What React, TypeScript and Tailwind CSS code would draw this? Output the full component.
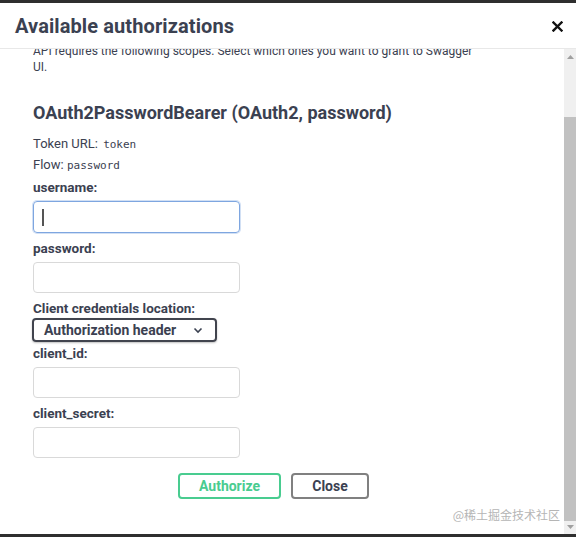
import React from "react";

const font = { fontFamily: 'Roboto, "Open Sans", sans-serif' };
const mono = { fontFamily: '"DejaVu Sans Mono", monospace' };

function Label({ children, mt }: { children: React.ReactNode; mt: string }) {
  return (
    <div className={`${mt} h-[16px] leading-[16px] text-[13.5px] font-bold text-[#3b4151]`}>{children}</div>
  );
}

export default function App() {
  return (
    <div className="w-[576px] h-[537px] bg-white flex flex-col overflow-hidden border-t-[3px] border-b-[3px] border-[#2f2f2f]" style={font}>
      <div className="h-[46px] shrink-0 flex items-center justify-between pl-[15px] pr-[13px] border-b border-[#e8e8e8]">
        <div className="text-[20px] font-bold text-[#3b4151] tracking-[0.1px]">Available authorizations</div>
        <svg width="11" height="11" viewBox="0 0 11 11" className="mt-[1px]">
          <path d="M1.5 1.5 L9.5 9.5 M9.5 1.5 L1.5 9.5" stroke="#111" strokeWidth="2.4" strokeLinecap="square" />
        </svg>
      </div>
      <div className="flex-1 flex min-h-0">
        <div className="flex-1 relative overflow-hidden">
          <div className="pl-[33px] pr-[40px]">
            <div className="mt-[-6px] w-[445px] text-[12px] leading-[16px] text-[#3b4151]">
              API requires the following scopes. Select which ones you want to grant to Swagger UI.
            </div>
            <div className="mt-[26px] h-[24px] leading-[24px] text-[18px] font-bold text-[#3b4151]">
              OAuth2PasswordBearer (OAuth2, password)
            </div>
            <div className="mt-[11px] h-[16px] leading-[16px] text-[13px] text-[#3b4151]">
              Token URL: <code className="text-[11px] ml-[2px]" style={mono}>token</code>
            </div>
            <div className="mt-[5px] h-[16px] leading-[16px] text-[13px] text-[#3b4151]">
              Flow: <code className="text-[11px]" style={mono}>password</code>
            </div>
            <Label mt="mt-[6px]">username:</Label>
            <div className="mt-[6px] w-[207px] h-[32px] rounded-[4px] border border-[#7ea6e0] shadow-[0_0_0_1px_rgba(126,166,224,0.35)] flex items-center pl-[8px]">
              <div className="w-[2px] h-[17px] bg-[#555]" />
            </div>
            <Label mt="mt-[7px]">password:</Label>
            <div className="mt-[6px] w-[207px] h-[31px] rounded-[4px] border border-[#d9d9d9]" />
            <Label mt="mt-[7px]">Client credentials location:</Label>
            <div className="mt-[2px] ml-[-1px] w-[185px] h-[24px] rounded-[4px] border-2 border-[#41444e] shadow-[0_1px_2px_rgba(0,0,0,0.25)] flex items-center justify-between pl-[10px] pr-[12px]">
              <span className="text-[14px] font-bold text-[#3b4151]">Authorization header</span>
              <svg width="10" height="7" viewBox="0 0 10 7">
                <path d="M1.5 1.5 L5 5 L8.5 1.5" fill="none" stroke="#3b4151" strokeWidth="1.6" />
              </svg>
            </div>
            <Label mt="mt-[3px]">client_id:</Label>
            <div className="mt-[6px] w-[207px] h-[31px] rounded-[4px] border border-[#d9d9d9]" />
            <Label mt="mt-[7px]">client_secret:</Label>
            <div className="mt-[6px] w-[207px] h-[31px] rounded-[4px] border border-[#d9d9d9]" />
            <div className="mt-[15px] flex justify-center gap-[10px] pr-[10px]">
              <div className="w-[103px] h-[26px] rounded-[4px] border-2 border-[#49cc90] flex items-center justify-center text-[14px] font-bold text-[#49cc90]">
                Authorize
              </div>
              <div className="w-[78px] h-[26px] rounded-[4px] border-2 border-[#808080] flex items-center justify-center text-[14px] font-bold text-[#3b4151]">
                Close
              </div>
            </div>
          </div>
          <div className="absolute right-[4px] bottom-[10px] text-[12px] text-[#b5b5b5]" style={{ fontFamily: '"Noto Sans CJK SC", sans-serif' }}>
            @稀土掘金技术社区
          </div>
        </div>
        <div className="w-[12px] shrink-0 bg-[#f0f0f0] flex flex-col items-center">
          <svg width="7" height="4" viewBox="0 0 7 4" className="mt-[6px]">
            <path d="M0 4 L3.5 0 L7 4 Z" fill="#a0a0a0" />
          </svg>
          <div className="mt-[58px] w-full h-[404px] bg-[#c1c1c1]" />
          <svg width="7" height="4" viewBox="0 0 7 4" className="mt-[4px]">
            <path d="M0 0 L3.5 4 L7 0 Z" fill="#a0a0a0" />
          </svg>
        </div>
      </div>
    </div>
  );
}
